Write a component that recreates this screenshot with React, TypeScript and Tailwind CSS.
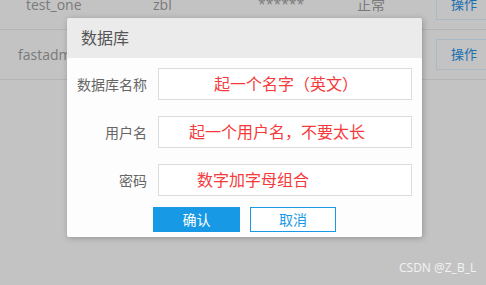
import React from "react";

const font = { fontFamily: '"Open Sans", "Noto Sans CJK SC", sans-serif' };

function Row({ label, hint, pad }: { label: string; hint: string; pad: string }) {
  return (
    <div className="flex items-center h-[32px]">
      <div className="w-[91px] pr-[11px] text-right text-[14px] text-[#666]">{label}</div>
      <div className={`w-[254px] h-[32px] border border-[#dcdcdc] bg-white flex items-center ${pad}`}>
        <span className="text-[16px] text-[#f53a3b] leading-none">{hint}</span>
      </div>
    </div>
  );
}

export default function App() {
  return (
    <div className="relative w-[486px] h-[285px] overflow-hidden bg-[#c3c3c3]" style={font}>
      {/* background table */}
      <div className="flex flex-col">
        <div className="relative h-[30px] border-b border-[#b4b4b4]">
          <span className="absolute left-[26px] top-[-6px] text-[14px] text-[#7a7a7a]">test_one</span>
          <span className="absolute left-[153px] top-[-6px] text-[14px] text-[#7a7a7a]">zbl</span>
          <span className="absolute left-[258px] top-[-7px] text-[14px] text-[#7a7a7a]">******</span>
          <span className="absolute left-[357px] top-[-6px] text-[14px] text-[#7a7a7a]">正常</span>
          <div className="absolute left-[436px] top-[-11px] w-[56px] h-[31px] border border-[#a9b9c6] flex items-center justify-center text-[13px] text-[#1a6fb0]">操作</div>
        </div>
        <div className="relative h-[50px] border-b border-[#b4b4b4]">
          <span className="absolute left-[18px] top-[14px] text-[14px] text-[#7a7a7a]">fastadmin</span>
          <div className="absolute left-[436px] top-[9px] w-[56px] h-[31px] border border-[#a9b9c6] flex items-center justify-center text-[13px] text-[#1a6fb0]">操作</div>
        </div>
      </div>

      {/* dialog */}
      <div className="absolute left-[67px] top-[18px] w-[355px] shadow-[1px_1px_6px_rgba(0,0,0,0.25)] rounded-[2px] overflow-hidden">
        <div className="h-[40px] bg-[#ebebeb] flex items-center pl-[14px] text-[16px] text-[#555]">数据库</div>
        <div className="bg-[#fdfdfd] pt-[10px] pb-[5px] flex flex-col gap-[16px]">
          <Row label="数据库名称" hint="起一个名字（英文）" pad="pl-[55px]" />
          <Row label="用户名" hint="起一个用户名，不要太长" pad="pl-[30px]" />
          <Row label="密码" hint="数字加字母组合" pad="pl-[38px]" />
          <div className="flex gap-[10px] pl-[86px] -mt-[5px]">
            <button className="w-[87px] h-[25px] bg-[#1899e6] text-white text-[14px]">确认</button>
            <button className="w-[86px] h-[25px] border border-[#1899e6] bg-white text-[#1899e6] text-[14px]">取消</button>
          </div>
        </div>
      </div>

      <div className="absolute left-[399px] top-[259px] text-[12px] text-[#f3f3f3]">CSDN @Z_B_L</div>
    </div>
  );
}
